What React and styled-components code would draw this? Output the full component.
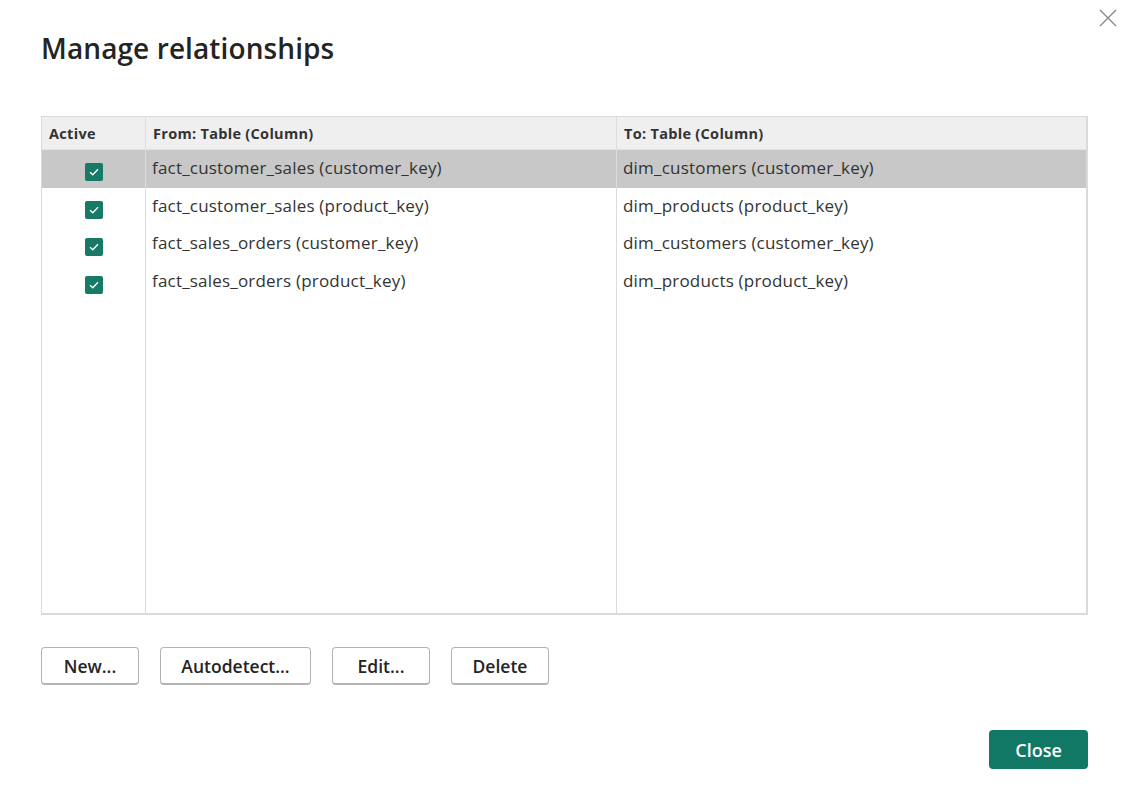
import React from "react";
import styled, { createGlobalStyle } from "styled-components";

const relationships = [
  { from: "fact_customer_sales (customer_key)", to: "dim_customers (customer_key)", active: true },
  { from: "fact_customer_sales (product_key)", to: "dim_products (product_key)", active: true },
  { from: "fact_sales_orders (customer_key)", to: "dim_customers (customer_key)", active: true },
  { from: "fact_sales_orders (product_key)", to: "dim_products (product_key)", active: true },
];

export default function App() {
  return (
    <>
      <GlobalStyle />
      <Dialog>
        <Header>
          <Title>Manage relationships</Title>
          <CloseX aria-label="Close">
            <svg width="18" height="18" viewBox="0 0 18 18">
              <path d="M1 1 L17 17 M17 1 L1 17" stroke="#8a8a8a" strokeWidth="1.4" fill="none" />
            </svg>
          </CloseX>
        </Header>

        <Table>
          <HeadRow>
            <HeadCell>Active</HeadCell>
            <HeadCell>From: Table (Column)</HeadCell>
            <HeadCell last>To: Table (Column)</HeadCell>
          </HeadRow>
          <Body>
            {relationships.map((r, i) => (
              <Row key={i} selected={i === 0}>
                <CheckCell>
                  <Check>
                    <svg width="10" height="8" viewBox="0 0 10 8">
                      <path d="M1 4.2 L3.8 6.8 L9 1.2" stroke="#fff" strokeWidth="1.3" fill="none" />
                    </svg>
                  </Check>
                </CheckCell>
                <Cell>{r.from}</Cell>
                <Cell last>{r.to}</Cell>
              </Row>
            ))}
            <Filler>
              <Cell />
              <Cell />
              <Cell last />
            </Filler>
          </Body>
        </Table>

        <Actions>
          <Button>New...</Button>
          <Button wide>Autodetect...</Button>
          <Button>Edit...</Button>
          <Button>Delete</Button>
        </Actions>

        <Footer>
          <PrimaryButton>Close</PrimaryButton>
        </Footer>
      </Dialog>
    </>
  );
}

const GlobalStyle = createGlobalStyle`
  body {
    margin: 0;
    background: #ffffff;
    font-family: "Open Sans", "Noto Sans", sans-serif;
    color: #252423;
  }
`;

const Dialog = styled.div`
  width: 1123px;
  height: 796px;
  box-sizing: border-box;
  padding: 0 35px 0 41px;
  display: flex;
  flex-direction: column;
`;

const Header = styled.div`
  display: flex;
  justify-content: space-between;
  align-items: flex-start;
  height: 116px;
  margin-right: -29px;
`;

const Title = styled.h1`
  margin: 29px 0 0;
  font-size: 28px;
  line-height: 38px;
  font-weight: 600;
  color: #252423;
  letter-spacing: 0.1px;
`;

const CloseX = styled.div`
  margin-top: 9px;
  width: 18px;
  height: 18px;
  display: flex;
`;

const Table = styled.div`
  height: 499px;
  box-sizing: border-box;
  border: 2px solid #dadada;
  border-top-width: 1px;
  border-left-width: 1px;
  display: flex;
  flex-direction: column;
`;

const columns = `104px 471px 1fr`;

const HeadRow = styled.div`
  display: grid;
  grid-template-columns: ${columns};
  height: 32px;
  background: #efefef;
  border-bottom: 1px solid #e2e2e2;
`;

const HeadCell = styled.div`
  display: flex;
  align-items: center;
  padding: 0 7px;
  font-size: 14.5px;
  font-weight: 700;
  letter-spacing: 0.3px;
  color: #333;
  border-right: ${(p) => (p.last ? "none" : "1px solid #dcdcdc")};
`;

const Body = styled.div`
  flex: 1;
  display: flex;
  flex-direction: column;
`;

const Row = styled.div`
  display: grid;
  grid-template-columns: ${columns};
  height: 37.5px;
  background: ${(p) => (p.selected ? "#c8c8c8" : "transparent")};
`;

const Cell = styled.div`
  display: flex;
  align-items: center;
  padding: 0 6px 2px;
  font-size: 17px;
  letter-spacing: 0.2px;
  color: #333;
  white-space: nowrap;
  border-right: ${(p) => (p.last ? "none" : "1px solid #dcdcdc")};
`;

const CheckCell = styled.div`
  display: flex;
  align-items: center;
  justify-content: center;
  padding-top: 7px;
  border-right: 1px solid #dcdcdc;
`;

const Check = styled.span`
  width: 18px;
  height: 18px;
  border-radius: 2px;
  background: #167a67;
  display: flex;
  align-items: center;
  justify-content: center;
`;

const Filler = styled.div`
  flex: 1;
  display: grid;
  grid-template-columns: ${columns};
`;

const Actions = styled.div`
  display: flex;
  gap: 21px;
  margin-top: 32px;
`;

const Button = styled.button`
  width: ${(p) => (p.wide ? "151px" : "98px")};
  height: 38px;
  box-sizing: border-box;
  background: #fff;
  border: 1px solid #b3b3b3;
  border-bottom-width: 2px;
  border-radius: 4px;
  font-family: "Open Sans", "Noto Sans", sans-serif;
  font-size: 17.5px;
  font-weight: 600;
  color: #252423;
  padding: 0;
`;

const Footer = styled.div`
  display: flex;
  justify-content: flex-end;
  margin-top: 45px;
`;

const PrimaryButton = styled.button`
  width: 99px;
  height: 39px;
  background: #117865;
  border: none;
  border-radius: 4px;
  color: #fff;
  font-family: "Open Sans", "Noto Sans", sans-serif;
  font-size: 18px;
  font-weight: 600;
  padding: 0;
`;
